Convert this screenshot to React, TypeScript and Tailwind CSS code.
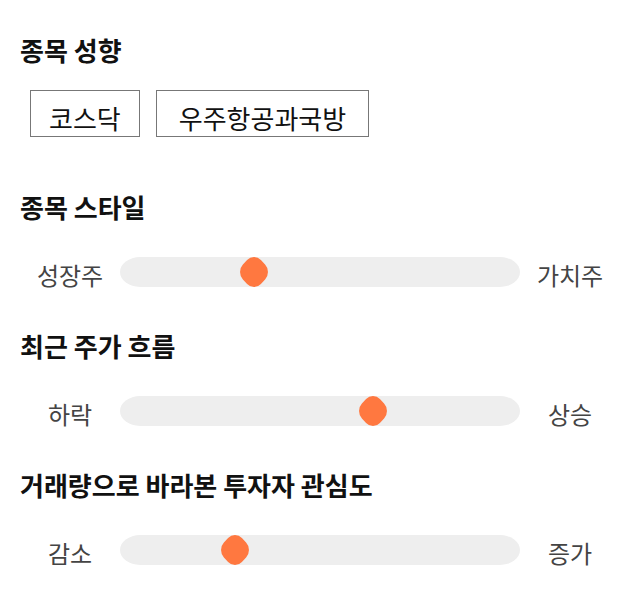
import React from "react";

const Thumb = () => (
  <svg width="30" height="32" viewBox="0 0 30 32" className="absolute top-[-1px]" style={{ left: -15 }}>
    <rect x="-13" y="-13" width="26" height="26" rx="10" fill="#ff7840" transform="translate(15 16) scale(0.98 1.05) rotate(45)" />
  </svg>
);

function Slider({ left, right, pos }: { left: string; right: string; pos: number }) {
  return (
    <div className="grid grid-cols-[100px_400px_100px] items-center h-[30px]">
      <div className="text-center text-[24px] text-[#444] leading-[30px] pt-[7px]">{left}</div>
      <div className="relative h-[30px] bg-[#eeeeee] rounded-[20px/15px]">
        <div className="absolute top-0 h-[30px]" style={{ left: pos }}>
          <Thumb />
        </div>
      </div>
      <div className="text-center text-[24px] text-[#444] leading-[30px] pt-[7px]">{right}</div>
    </div>
  );
}

export default function App() {
  const font = { fontFamily: '"Noto Sans CJK KR", "Noto Sans", sans-serif' };
  return (
    <div className="w-[640px] h-[606px] bg-white px-[20px] pt-[34px]" style={font}>
      <h2 className="text-[26px] font-bold text-[#111] leading-[32px]">종목 성향</h2>
      <div className="flex gap-[16px] mt-[24px] ml-[10px]">
        <div className="border border-[#777] px-[18px] pt-[7px] h-[47px] flex items-center text-[26px] text-[#111]">코스닥</div>
        <div className="border border-[#777] px-[22px] pt-[7px] h-[47px] flex items-center text-[26px] text-[#111]">우주항공과국방</div>
      </div>
      <h2 className="text-[26px] font-bold text-[#111] leading-[32px] mt-[54px]">종목 스타일</h2>
      <div className="mt-[30px]">
        <Slider left="성장주" right="가치주" pos={134} />
      </div>
      <h2 className="text-[26px] font-bold text-[#111] leading-[32px] mt-[47px]">최근 주가 흐름</h2>
      <div className="mt-[30px]">
        <Slider left="하락" right="상승" pos={253} />
      </div>
      <h2 className="text-[26px] font-bold text-[#111] leading-[32px] mt-[47px]">거래량으로 바라본 투자자 관심도</h2>
      <div className="mt-[30px]">
        <Slider left="감소" right="증가" pos={115} />
      </div>
    </div>
  );
}
